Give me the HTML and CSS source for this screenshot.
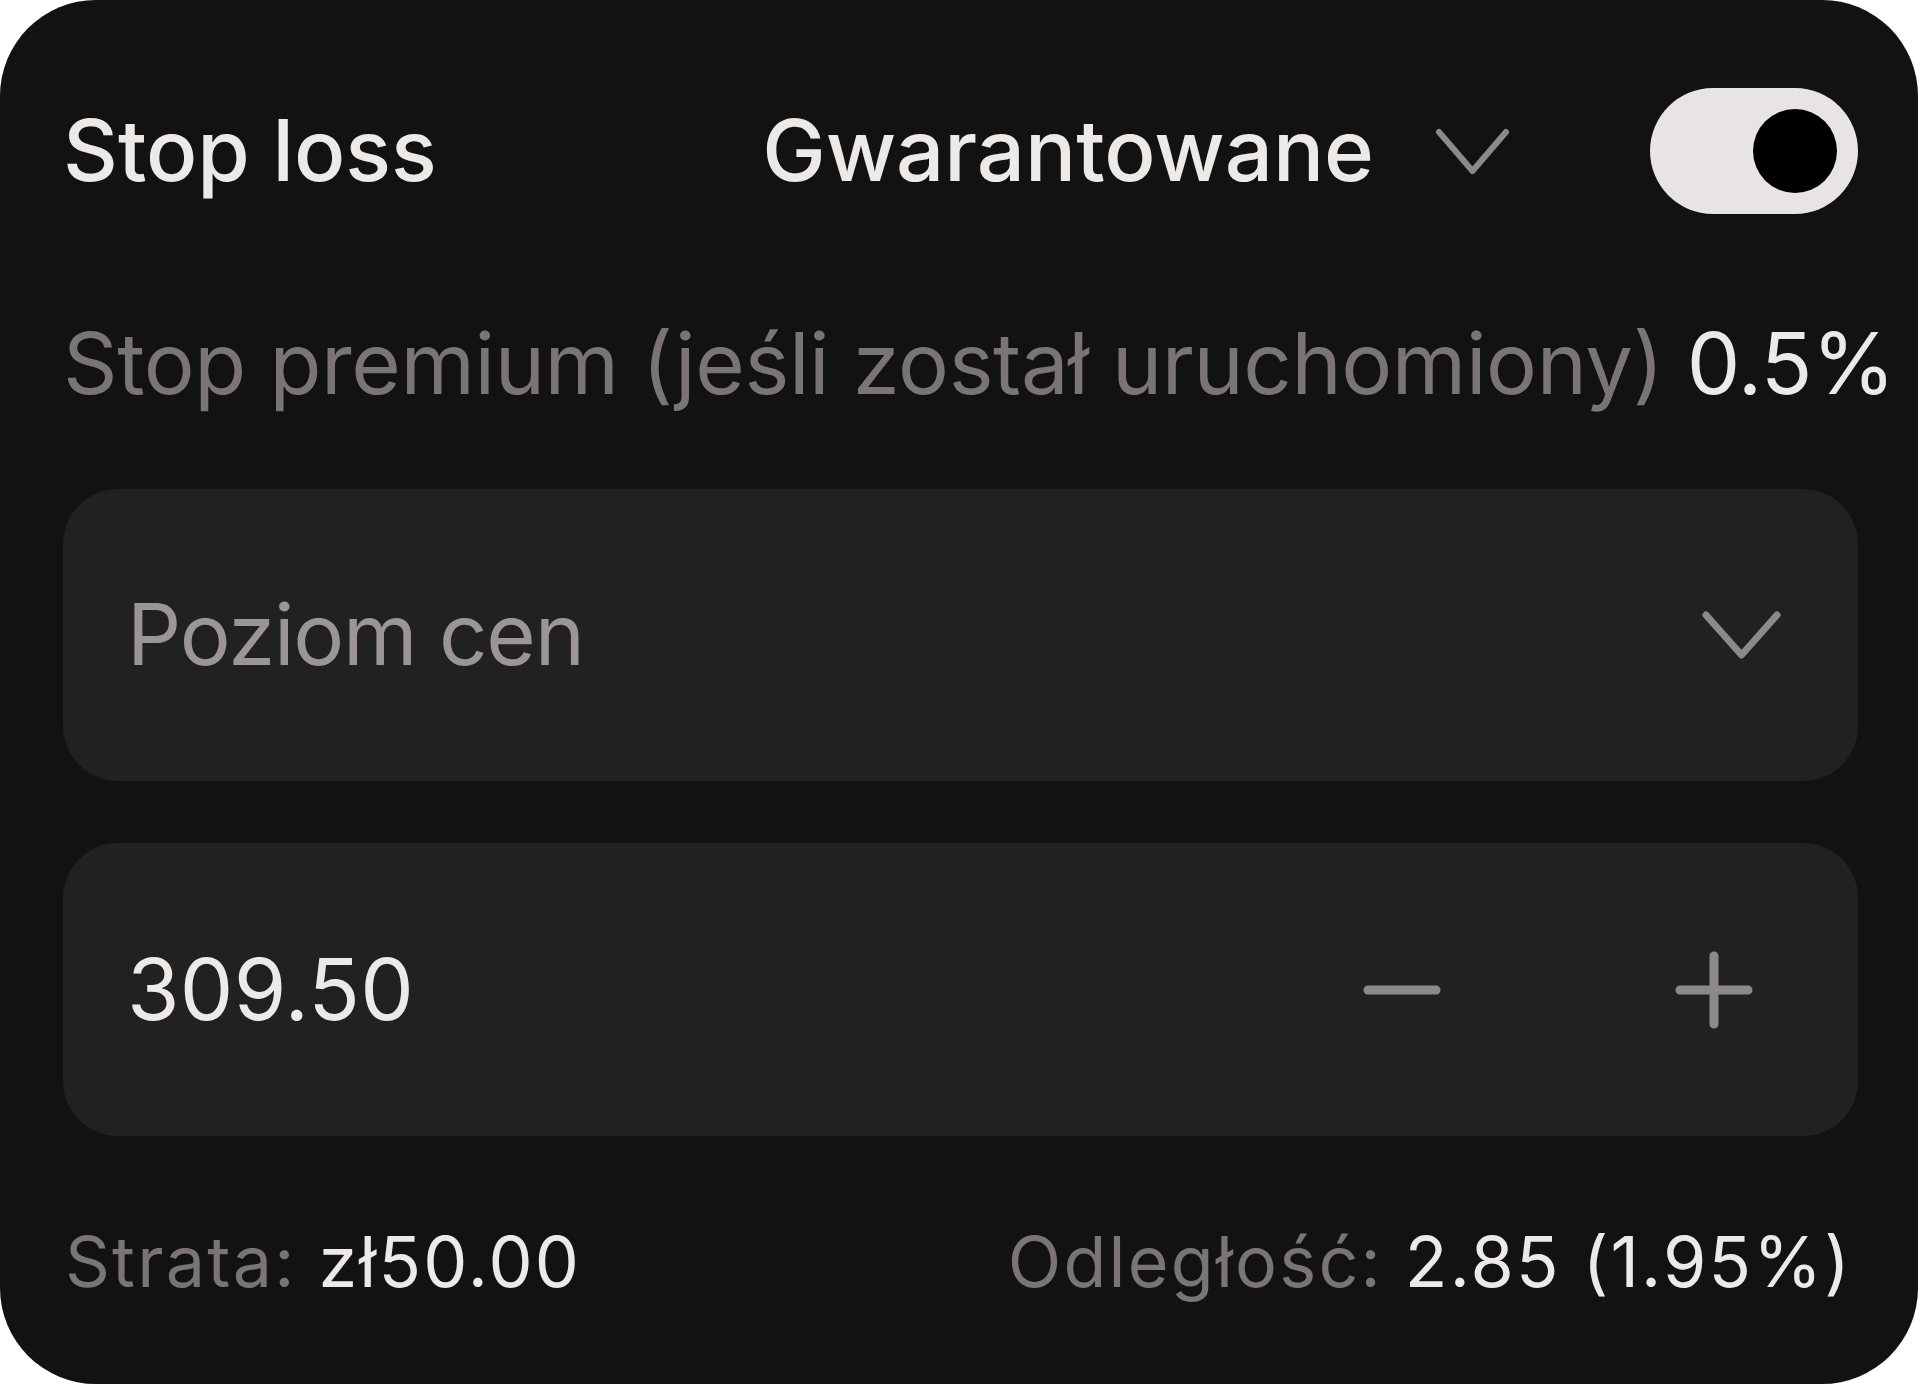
FILE: index.html
```html
<!DOCTYPE html>
<html lang="pl">
<head>
<meta charset="utf-8">
<title>Stop loss</title>
<link rel="stylesheet" href="styles.css">
</head>
<body>
<div class="card">
  <div class="header">
    <div class="title">Stop loss</div>
    <div class="type">
      <span class="type-label">Gwarantowane</span>
      <svg class="chev-small" viewBox="0 0 75 47" width="75" height="47"><path d="M4 4 L37.5 43 L71 4" fill="none" stroke="#8e8989" stroke-width="6" stroke-linecap="round" stroke-linejoin="round"/></svg>
    </div>
    <div class="toggle"><div class="knob"></div></div>
  </div>
  <div class="premium"><span class="muted">Stop premium (jeśli został uruchomiony)</span> <span class="value">0.5%</span></div>
  <div class="field select">
    <span class="placeholder">Poziom cen</span>
    <svg class="chev" viewBox="0 0 79 48" width="79" height="48"><path d="M4 4 L39.5 44 L75 4" fill="none" stroke="#8e8989" stroke-width="7" stroke-linecap="round" stroke-linejoin="round"/></svg>
  </div>
  <div class="field stepper">
    <span class="number">309.50</span>
    <div class="steps">
      <svg class="minus" viewBox="0 0 78 10" width="78" height="10"><path d="M5 5 H73" stroke="#8e8989" stroke-width="9" stroke-linecap="round"/></svg>
      <svg class="plus" viewBox="0 0 78 78" width="78" height="78"><path d="M5 39 H73 M39 5 V73" stroke="#8e8989" stroke-width="9" stroke-linecap="round"/></svg>
    </div>
  </div>
  <div class="footer">
    <div><span class="muted">Strata:</span> <span class="value">zł50.00</span></div>
    <div><span class="muted">Odległość:</span> <span class="value">2.85 (1.95%)</span></div>
  </div>
</div>
</body>
</html>
```

FILE: styles.css
```css
html, body {
  margin: 0;
  padding: 0;
  background: #ffffff;
}
body {
  font-family: Inter, "Noto Sans", "Liberation Sans", sans-serif;
  color: #ece9e7;
}
.card {
  box-sizing: border-box;
  width: 1918px;
  height: 1384px;
  background: #131213;
  border-radius: 96px;
  padding: 88px 60px 0 63px;
  display: flex;
  flex-direction: column;
  overflow: hidden;
}
.header {
  display: flex;
  align-items: center;
  height: 126px;
}
.title {
  flex: 1;
  font-size: 85px;
  font-weight: 500;
  line-height: 100px;
  white-space: nowrap;
}
.type {
  display: flex;
  align-items: center;
  margin-right: 140px;
}
.type-label {
  font-size: 85px;
  font-weight: 500;
  line-height: 100px;
  white-space: nowrap;
}
.chev-small {
  margin-left: 61px;
  display: block;
}
.toggle {
  box-sizing: border-box;
  width: 208px;
  height: 126px;
  border-radius: 63px;
  background: #e8e4e3;
  display: flex;
  align-items: center;
  justify-content: flex-end;
  padding-right: 21px;
}
.knob {
  width: 84px;
  height: 84px;
  border-radius: 50%;
  background: #000000;
}
.premium {
  margin-top: 100px;
  font-size: 85px;
  line-height: 100px;
  letter-spacing: -0.4px;
  white-space: nowrap;
}
.muted {
  color: #7a7574;
}
.value {
  color: #ece9e7;
}
.field {
  box-sizing: border-box;
  height: 292px;
  border-radius: 55px;
  background: #222122;
  display: flex;
  align-items: center;
  justify-content: space-between;
}
.select {
  margin-top: 75px;
  padding: 0 77px 0 64px;
}
.placeholder {
  font-size: 85px;
  line-height: 100px;
  letter-spacing: -1.2px;
  color: #9b9695;
}
.chev {
  display: block;
}
.stepper {
  margin-top: 62px;
  height: 293px;
  padding: 0 105px 0 64px;
}
.number {
  font-size: 85px;
  line-height: 100px;
  letter-spacing: 0.3px;
  color: #ece9e7;
}
.steps {
  display: flex;
  align-items: center;
  gap: 234px;
}
.steps svg {
  display: block;
}
.footer {
  margin-top: 86px;
  display: flex;
  justify-content: space-between;
  font-size: 70px;
  line-height: 80px;
  letter-spacing: 2.2px;
  white-space: nowrap;
  padding: 0 6px 0 2px;
}
```
